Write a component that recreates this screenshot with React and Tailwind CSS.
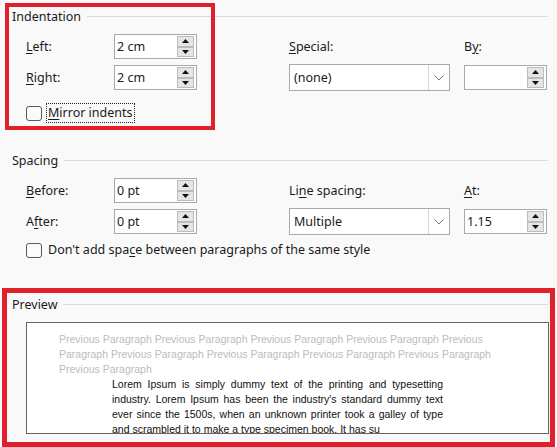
import React from 'react';

const ui = { fontFamily: '"Noto Sans", "Open Sans", sans-serif' };
const arial = { fontFamily: '"Liberation Sans", Arial, sans-serif' };

function U({ children }) {
  return <span className="underline underline-offset-[2px] decoration-1">{children}</span>;
}

function Heading({ children }) {
  return (
    <div className="flex items-center h-4 pl-[12px] pr-[9px]">
      <span>{children}</span>
      <div className="flex-1 h-px bg-[#dcdcdc] ml-[6px] mt-[-1px]" />
    </div>
  );
}

function Spinner({ value }) {
  return (
    <div className="w-[83px] h-[25px] border border-[#a9a9a9] bg-white flex items-center">
      <span className="flex-1 pl-[2px]">{value}</span>
      <div className="flex flex-col w-[17px] h-[23px] mr-[2px] py-px">
        {['up', 'down'].map((d) => (
          <div
            key={d}
            className="flex-1 bg-[#e5e5e5] border border-[#bcbcbc] flex items-center justify-center"
          >
            <svg width="7" height="4" viewBox="0 0 7 4">
              {d === 'up' ? (
                <polygon points="3.5,0 7,4 0,4" fill="#111" />
              ) : (
                <polygon points="0,0 7,0 3.5,4" fill="#111" />
              )}
            </svg>
          </div>
        ))}
      </div>
    </div>
  );
}

function Dropdown({ value }) {
  return (
    <div className="w-[161px] h-[27px] border border-[#a9a9a9] bg-white flex items-center">
      <span className="flex-1 pl-[4px]">{value}</span>
      <div className="w-[21px] h-full border-l border-[#d4d4d4] flex items-center justify-center">
        <svg width="10" height="6" viewBox="0 0 10 6">
          <polyline points="0.5,0.5 5,5 9.5,0.5" fill="none" stroke="#777" strokeWidth="1" />
        </svg>
      </div>
    </div>
  );
}

function Checkbox() {
  return <div className="w-[16px] h-[15px] rounded-[3px] border border-[#5a5a5a] bg-[#fbfbfb]" />;
}

export default function App() {
  return (
    <div
      className="relative w-[557px] h-[447px] overflow-hidden bg-[#f9f9f9] text-[12.5px] leading-4 text-[#1a1a1a]"
      style={ui}
    >
      <div className="pt-[9px]">
        {/* Indentation */}
        <Heading>Indentation</Heading>
        <div className="grid grid-cols-[88px_175px_175px_84px] grid-rows-[25px_25px] gap-y-[6px] ml-[26px] mt-[9px] items-center">
          <span><U>L</U>eft:</span>
          <Spinner value="2 cm" />
          <span><U>S</U>pecial:</span>
          <span>B<U>y</U>:</span>
          <span><U>R</U>ight:</span>
          <Spinner value="2 cm" />
          <Dropdown value="(none)" />
          <Spinner value="" />
        </div>
        <div className="flex items-center h-[20px] ml-[26px] mt-[13px] gap-[4px]">
          <Checkbox />
          <span className="border border-dotted border-[#222] px-px h-[20px] flex items-center">
            <U>M</U>irror indents
          </span>
        </div>

        {/* Spacing */}
        <div className="mt-[30px]">
          <Heading>Spacing</Heading>
        </div>
        <div className="grid grid-cols-[88px_175px_175px_84px] grid-rows-[25px_25px] gap-y-[6px] ml-[26px] mt-[9px] items-center">
          <span><U>B</U>efore:</span>
          <Spinner value="0 pt" />
          <span>Li<U>n</U>e spacing:</span>
          <span><U>A</U>t:</span>
          <span>A<U>f</U>ter:</span>
          <Spinner value="0 pt" />
          <Dropdown value="Multiple" />
          <Spinner value="1.15" />
        </div>
        <div className="flex items-center h-[20px] ml-[26px] mt-[6px] gap-[6px]">
          <Checkbox />
          <span>Don't add spa<U>c</U>e between paragraphs of the same style</span>
        </div>

        {/* Preview */}
        <div className="mt-[37px]">
          <Heading>Preview</Heading>
        </div>
        <div
          className="ml-[26px] mt-[9px] w-[523px] h-[112px] border border-[#646464] bg-white overflow-hidden pt-[9px] text-[10.5px] leading-[15px]"
          style={arial}
        >
          <div className="pl-[32px] text-[#bcbcbc]">
            <div>Previous Paragraph Previous Paragraph Previous Paragraph Previous Paragraph Previous</div>
            <div>Paragraph Previous Paragraph Previous Paragraph Previous Paragraph Previous Paragraph</div>
            <div>Previous Paragraph</div>
          </div>
          <div className="ml-[85px] w-[331px] text-[#111]">
            <div className="text-justify [text-align-last:justify]">Lorem Ipsum is simply dummy text of the printing and typesetting</div>
            <div className="text-justify [text-align-last:justify]">industry. Lorem Ipsum has been the industry's standard dummy text</div>
            <div className="text-justify [text-align-last:justify]">ever since the 1500s, when an unknown printer took a galley of type</div>
            <div>and scrambled it to make a type specimen book. It has su</div>
          </div>
        </div>
      </div>

      {/* annotation boxes */}
      <div className="absolute left-[5px] top-[3px] w-[210px] h-[127px] border-4 border-[#e0202a]" />
      <div className="absolute left-[2px] top-[288px] w-[553px] h-[159px] border-[5px] border-[#e0202a]" />
    </div>
  );
}
